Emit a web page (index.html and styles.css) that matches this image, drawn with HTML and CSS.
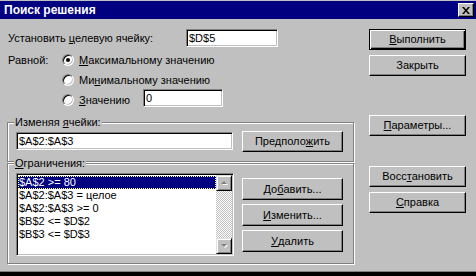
FILE: index.html
```html
<!DOCTYPE html>
<html lang="ru">
<head>
    <meta charset="UTF-8">
    <title>Поиск решения</title>
    <link rel="stylesheet" href="styles.css">
</head>
<body>
    <div class="window">
        <div class="titlebar">
            <span class="title">Поиск решения</span>
            <div class="close">
                <svg width="8" height="7" viewBox="0 0 8 7"><path d="M0 0h2l2 2.5L6 0h2L5 3.5 8 7H6L4 4.5 2 7H0l3-3.5z" fill="#000"/></svg>
            </div>
        </div>

        <div class="content">
            <div class="main">
                <div class="target-row">
                    <span class="target-label">Установить <u>ц</u>елевую ячейку:</span>
                    <div class="field target">$D$5</div>
                </div>

                <div class="equal">
                    <span class="equal-label">Равной:</span>
                    <div class="radios">
                        <div class="radio-row"><span class="radio checked"></span><span><u>М</u>аксимальному значению</span></div>
                        <div class="radio-row"><span class="radio"></span><span>Ми<u>н</u>имальному значению</span></div>
                        <div class="radio-row">
                            <span class="radio"></span><span class="value-label"><u>З</u>начению</span>
                            <div class="field value">0</div>
                        </div>
                    </div>
                </div>

                <div class="group changing">
                    <div class="legend">Изменяя <u>я</u>чейки:</div>
                    <div class="group-body">
                        <div class="field cells">$A$2:$A$3</div>
                        <div class="btn guess">Предполо<u>ж</u>ить</div>
                    </div>
                </div>

                <div class="group limits">
                    <div class="legend"><u>О</u>граничения:</div>
                    <div class="group-body">
                        <div class="listbox">
                            <div class="items">
                                <div class="item selected">$A$2 &gt;= 80</div>
                                <div class="item">$A$2:$A$3 = целое</div>
                                <div class="item">$A$2:$A$3 &gt;= 0</div>
                                <div class="item">$B$2 &lt;= $D$2</div>
                                <div class="item">$B$3 &lt;= $D$3</div>
                            </div>
                            <div class="scrollbar">
                                <div class="sb-btn"><svg width="7" height="5" viewBox="0 0 7 5"><path d="M4 1l3 3H1z" fill="#fff"/><path d="M3 0l3 3H0z" fill="#808080"/></svg></div>
                                <div class="sb-track"></div>
                                <div class="sb-btn"><svg width="7" height="5" viewBox="0 0 7 5"><path d="M1 1h6L4 4z" fill="#fff"/><path d="M0 0h6L3 3z" fill="#808080"/></svg></div>
                            </div>
                        </div>
                        <div class="list-buttons">
                            <div class="btn tall">До<u>б</u>авить...</div>
                            <div class="btn tall"><u>И</u>зменить...</div>
                            <div class="btn tall"><u>У</u>далить</div>
                        </div>
                    </div>
                </div>
            </div>

            <div class="side">
                <div class="btn default"><u>В</u>ыполнить</div>
                <div class="btn close-btn">Закрыть</div>
                <div class="btn params"><u>П</u>араметры...</div>
                <div class="btn restore">Восс<u>т</u>ановить</div>
                <div class="btn help"><u>С</u>правка</div>
            </div>
        </div>
    </div>
</body>
</html>
```

FILE: styles.css
```css
* {
    box-sizing: border-box;
}

body {
    margin: 0;
    background-color: #c0c0c0;
    font-family: "Liberation Sans", Arial, sans-serif;
    font-size: 11px;
    color: #000;
    overflow: hidden;
}

.window {
    width: 476px;
    height: 276px;
    border-top: 1px solid #c0c0c0;
    border-bottom: 4px solid #000;
    box-shadow: inset 0 -1px #808080;
}

.titlebar {
    height: 18px;
    background-color: #000080;
    color: #fff;
    display: flex;
    align-items: center;
    justify-content: space-between;
    padding: 0 2px 0 4px;
}

.title {
    font-weight: bold;
    font-size: 12px;
}

.close {
    width: 16px;
    height: 14px;
    background-color: #c0c0c0;
    border: 1px solid;
    border-color: #fff #000 #000 #fff;
    box-shadow: inset -1px -1px #808080;
    display: flex;
    align-items: center;
    justify-content: center;
}

.content {
    display: flex;
    padding: 10px 0 0 7px;
}

.main {
    width: 348px;
}

/* поля ввода */
.field {
    height: 18px;
    background-color: #fff;
    border: 1px solid;
    border-color: #808080 #fff #fff #808080;
    box-shadow: inset 1px 1px #000, inset -1px -1px #c0c0c0;
    padding: 0 2px;
    line-height: 16px;
    white-space: nowrap;
}

.target-row {
    display: flex;
    align-items: center;
    height: 18px;
}

.target-label {
    width: 179px;
    padding-left: 1px;
}

.field.target {
    width: 92px;
}

.equal {
    display: flex;
    margin-top: 3px;
}

.equal-label {
    width: 55px;
    height: 20px;
    line-height: 20px;
    padding-left: 1px;
}

.radio-row {
    display: flex;
    align-items: center;
    height: 20px;
}

.radio {
    flex: none;
    width: 12px;
    height: 12px;
    border-radius: 50%;
    background-color: #fff;
    border: 1px solid;
    border-color: #808080 #fff #fff #808080;
    box-shadow: inset 1px 1px #000, inset -1px -1px #c0c0c0;
    margin-right: 5px;
    display: flex;
    align-items: center;
    justify-content: center;
}

.radio.checked::after {
    content: "";
    width: 4px;
    height: 4px;
    border-radius: 50%;
    background-color: #000;
}

.value-label {
    width: 64px;
}

.field.value {
    width: 80px;
    margin-bottom: 4px;
}

/* рамки групп */
.group {
    width: 347px;
    border: 1px solid #808080;
    box-shadow: inset 1px 1px #fff, 1px 1px #fff;
}

.group.changing {
    margin-top: 12px;
    height: 40px;
}

.group.limits {
    margin-top: 1px;
    height: 101px;
}

.legend {
    display: table;
    margin: -7px 0 -6px 6px;
    padding: 0 1px;
    line-height: 13px;
    background-color: #c0c0c0;
}

.group-body {
    display: flex;
    align-items: flex-start;
    padding: 8px 10px 0 8px;
}

.limits .group-body {
    padding-top: 9px;
}

.field.cells {
    width: 217px;
    margin-top: 1px;
}

/* кнопки */
.btn {
    width: 97px;
    height: 21px;
    background-color: #c0c0c0;
    border: 1px solid;
    border-color: #fff #000 #000 #fff;
    box-shadow: inset -1px -1px #808080;
    display: flex;
    align-items: center;
    justify-content: center;
    padding-bottom: 1px;
    white-space: nowrap;
}

.btn.default {
    border-color: #000;
    box-shadow: inset 1px 1px #fff, inset -1px -1px #000, inset -2px -2px #808080;
}

.btn.guess {
    width: 101px;
    margin-left: 9px;
}

.side {
    margin-left: 14px;
    display: flex;
    flex-direction: column;
}

.btn.close-btn {
    margin-top: 5px;
}

.btn.params {
    margin-top: 39px;
}

.btn.restore {
    margin-top: 30px;
}

.btn.help {
    margin-top: 5px;
}

/* список ограничений */
.listbox {
    width: 218px;
    height: 83px;
    display: flex;
    background-color: #fff;
    border: 1px solid;
    border-color: #808080 #fff #fff #808080;
    box-shadow: inset 1px 1px #000, inset -1px -1px #c0c0c0;
    padding: 1px;
}

.items {
    flex: 1;
    padding-top: 1px;
}

.item {
    height: 13px;
    line-height: 13px;
    padding-left: 1px;
    white-space: nowrap;
}

.item.selected {
    background-color: #000080;
    color: #fff;
    outline: 1px dotted #ffff80;
    outline-offset: -1px;
}

.scrollbar {
    width: 16px;
    display: flex;
    flex-direction: column;
}

.sb-btn {
    height: 16px;
    background-color: #c0c0c0;
    border: 1px solid;
    border-color: #dfdfdf #000 #000 #dfdfdf;
    box-shadow: inset 1px 1px #fff, inset -1px -1px #808080;
    display: flex;
    align-items: center;
    justify-content: center;
}

.sb-track {
    flex: 1;
    background: repeating-conic-gradient(#c0c0c0 0 25%, #fff 0 50%) 0 0 / 2px 2px;
}

.list-buttons {
    display: flex;
    flex-direction: column;
    gap: 4px;
    margin-left: 8px;
    margin-top: 5px;
}

.btn.tall {
    width: 101px;
    height: 22px;
}
```
